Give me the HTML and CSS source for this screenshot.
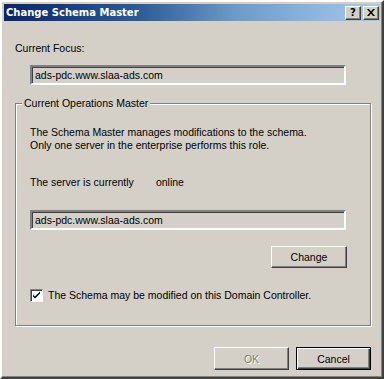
FILE: index.html
```html
<!DOCTYPE html>
<html lang="en">
<head>
  <meta charset="UTF-8">
  <title>Change Schema Master</title>
  <link rel="stylesheet" href="styles.css">
</head>
<body>

  <div class="window">
    <div class="titlebar">
      <span class="title">Change Schema Master</span>
      <div class="caption-buttons">
        <button class="caption-btn">?</button>
        <button class="caption-btn close">
          <svg width="8" height="7" viewBox="0 0 8 7">
            <path d="M0 0h2l2 2.5 2-2.5h2l-3 3.5 3 3.5h-2l-2-2.5-2 2.5h-2l3-3.5z" fill="#000"/>
          </svg>
        </button>
      </div>
    </div>

    <div class="content">
      <div class="label">Current Focus:</div>
      <div class="textbox">ads-pdc.www.slaa-ads.com</div>

      <fieldset class="group">
        <legend>Current Operations Master</legend>

        <p class="desc">
          The Schema Master manages modifications to the schema.<br>
          Only one server in the enterprise performs this role.
        </p>

        <div class="status">
          <span>The server is currently</span>
          <span class="state">online</span>
        </div>

        <div class="textbox">ads-pdc.www.slaa-ads.com</div>

        <div class="change-row">
          <button class="btn">Change</button>
        </div>

        <label class="check-row">
          <span class="checkbox">
            <svg width="9" height="9" viewBox="0 0 9 9">
              <path d="M1 3.5l2 2 5-5v2l-5 5-2-2z" fill="#000"/>
            </svg>
          </span>
          The Schema may be modified on this Domain Controller.
        </label>
      </fieldset>

      <div class="footer">
        <button class="btn disabled">OK</button>
        <button class="btn default">Cancel</button>
      </div>
    </div>
  </div>

</body>
</html>
```

FILE: styles.css
```css
body {
  margin: 0;
  background-color: #d4d0c8;
  font-family: 'Liberation Sans', Arial, sans-serif;
  font-size: 10.5px;
  color: #000;
}

.window {
  width: 384px;
  height: 379px;
  box-sizing: border-box;
  padding: 2px;
  border: 2px solid;
  border-color: #fff #404040 #404040 #fff;
  box-shadow: inset -1px -1px 0 #808080;
  background-color: #d4d0c8;
}

.titlebar {
  height: 17px;
  display: flex;
  align-items: center;
  justify-content: space-between;
  padding: 0 1px 0 2px;
  background: linear-gradient(to right, #0a246a 0%, #2a5a96 35%, #6e9bc8 62%, #a6caf0 100%);
}

.title {
  color: #fff;
  font-family: 'DejaVu Sans', Verdana, sans-serif;
  font-weight: bold;
  font-size: 10px;
}

.caption-buttons {
  display: flex;
  gap: 2px;
}

.caption-btn {
  width: 16px;
  height: 14px;
  padding: 0;
  display: flex;
  align-items: center;
  justify-content: center;
  font-family: 'DejaVu Sans', sans-serif;
  font-weight: bold;
  font-size: 10px;
  background-color: #d4d0c8;
  border: 1px solid;
  border-color: #fff #404040 #404040 #fff;
  box-shadow: inset -1px -1px 0 #808080;
}

.content {
  padding: 21px 9px 0 11px;
}

.label {
  line-height: 13px;
}

.textbox {
  width: 316px;
  height: 20px;
  box-sizing: border-box;
  margin: 10px 0 0 15px;
  padding: 0 3px;
  line-height: 16px;
  border: 2px solid;
  border-color: #808080 #fff #fff #808080;
  box-shadow: inset 1px 1px 0 #404040;
}

.group {
  margin: 12px 0 0 0;
  padding: 0 0 23px 14px;
  border: 1px solid #808080;
  box-shadow: inset 1px 1px 0 #fff, 1px 1px 0 #fff;
}

.group legend {
  padding: 0 2px;
  margin-left: -8px;
  line-height: 13px;
  background-color: #d4d0c8;
}

.group .textbox {
  margin: 21px 0 0 0;
}

.desc {
  margin: 16px 0 0 0;
  line-height: 13px;
}

.status {
  margin-top: 24px;
  line-height: 13px;
  display: flex;
}

.state {
  margin-left: 22px;
}

.btn {
  width: 76px;
  height: 22px;
  padding: 0;
  font-family: inherit;
  font-size: 10.5px;
  background-color: #d4d0c8;
  border: 1px solid;
  border-color: #fff #404040 #404040 #fff;
  box-shadow: inset -1px -1px 0 #808080;
}

.change-row {
  display: flex;
  justify-content: flex-end;
  width: 317px;
  margin-top: 16px;
}

.check-row {
  display: flex;
  align-items: center;
  gap: 5px;
  margin-top: 21px;
  line-height: 13px;
}

.checkbox {
  width: 13px;
  height: 13px;
  box-sizing: border-box;
  display: flex;
  align-items: center;
  justify-content: center;
  border: 1px solid;
  border-color: #808080 #fff #fff #808080;
  box-shadow: inset 1px 1px 0 #404040;
  background-color: #fff;
}

.footer {
  display: flex;
  justify-content: flex-end;
  gap: 7px;
  margin-top: 21px;
}

.footer .btn {
  width: 75px;
  height: 23px;
}

.btn.disabled {
  color: #808080;
  text-shadow: 1px 1px 0 #fff;
}

.btn.default {
  border: 1px solid #000;
  box-shadow: inset 1px 1px 0 #fff, inset -1px -1px 0 #404040, inset -2px -2px 0 #808080;
}
```
